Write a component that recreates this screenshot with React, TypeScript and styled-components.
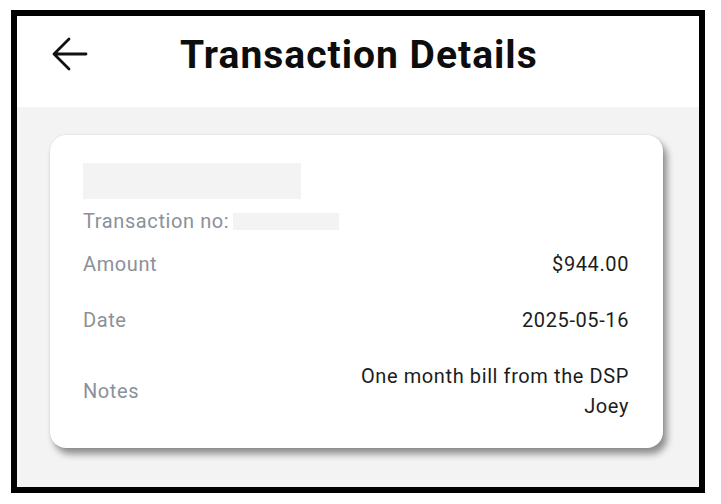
import React from "react";
import styled, { createGlobalStyle } from "styled-components";

const GlobalStyle = createGlobalStyle`
  body {
    margin: 0;
    background: #fff;
    font-family: Roboto, "Liberation Sans", sans-serif;
  }
`;

const rows = [
  { label: "Amount", value: "$944.00" },
  { label: "Date", value: "2025-05-16" },
  { label: "Notes", value: "One month bill from the DSP\nJoey" },
];

const BackArrow = () => (
  <svg width="36" height="36" viewBox="0 0 36 36" fill="none">
    <path
      d="M34 17H3M17 2L2 17l15 15"
      stroke="#111"
      strokeWidth="2.8"
      strokeLinecap="round"
      strokeLinejoin="round"
    />
  </svg>
);

const App = () => {
  return (
    <>
      <GlobalStyle />
      <Frame>
        <Header>
          <BackButton>
            <BackArrow />
          </BackButton>
          <Title>Transaction Details</Title>
        </Header>
        <Content>
          <Card>
            <Placeholder />
            <TxnLine>
              Transaction no:
              <SmallPlaceholder />
            </TxnLine>
            {rows.map((row) => (
              <Row key={row.label}>
                <Label>{row.label}</Label>
                <Value>{row.value}</Value>
              </Row>
            ))}
          </Card>
        </Content>
      </Frame>
    </>
  );
};

/**
 * styles
 */

const Frame = styled.div`
  box-sizing: border-box;
  width: 694px;
  height: 483px;
  margin: 10px 0 0 11px;
  border: 6px solid #000;
  display: flex;
  flex-direction: column;
  overflow: hidden;
`;

const Header = styled.div`
  box-sizing: border-box;
  height: 91px;
  flex-shrink: 0;
  display: flex;
  align-items: center;
  padding: 0 0 14px 35px;
  background: #fff;
`;

const BackButton = styled.div`
  display: flex;
  width: 36px;
  height: 36px;
  margin-top: 1px;
`;

const Title = styled.h1`
  margin: 0 0 0 92px;
  font-size: 39px;
  font-weight: 700;
  color: #0d0d0d;
  letter-spacing: 1px;
`;

const Content = styled.div`
  flex: 1;
  background: #f3f3f3;
  padding: 28px 0 0 33px;
`;

const Card = styled.div`
  box-sizing: border-box;
  width: 613px;
  background: #fff;
  border-radius: 16px;
  padding: 28px 34px 14px 33px;
  box-shadow: 4px 6px 7px rgba(0, 0, 0, 0.42), 0 0 2px rgba(0, 0, 0, 0.12);
`;

const Placeholder = styled.div`
  width: 218px;
  height: 36px;
  background: #f3f3f3;
`;

const TxnLine = styled.div`
  display: flex;
  align-items: center;
  margin-top: 7px;
  font-size: 20px;
  line-height: 30px;
  letter-spacing: 0.6px;
  color: #8b9198;
`;

const SmallPlaceholder = styled.span`
  display: inline-block;
  width: 106px;
  height: 17px;
  margin-left: 4px;
  background: #f3f3f3;
`;

const Row = styled.div`
  display: flex;
  align-items: center;
  justify-content: space-between;
  padding: 13px 0;
  font-size: 20px;
  line-height: 30px;
  letter-spacing: 0.6px;
`;

const Label = styled.span`
  color: #8b9198;
`;

const Value = styled.span`
  color: #1c1c1c;
  text-align: right;
  white-space: pre-line;
`;

export default App;
